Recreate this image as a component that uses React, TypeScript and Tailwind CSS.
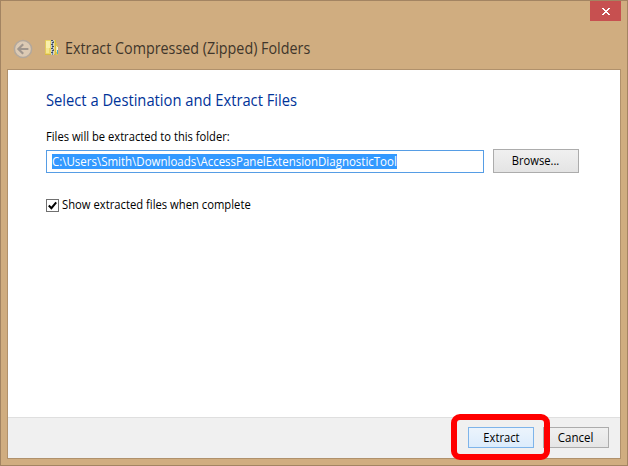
function BackButton() {
  return (
    <svg className="mt-[2px]" width="20" height="20" viewBox="0 0 20 20" fill="none">
      <circle cx="10" cy="10" r="8.6" fill="#dccab4" stroke="#b3a89c" strokeWidth="1.5" />
      <path d="M15.4 10H6M10.2 5.2L5.4 10l4.8 4.8" stroke="#a0968d" strokeWidth="2.2" />
    </svg>
  );
}

function ZipIcon() {
  return (
    <svg className="shrink-0" width="14" height="16" viewBox="0 0 14 16" shapeRendering="crispEdges">
      <path d="M10 3h2v3h1v9h-3z" fill="#dfc550" />
      <path d="M11 6h1v6h-1z" fill="#f5eaa4" />
      <path d="M12 7h1v3h-1z" fill="#f4f0dc" />
      <path d="M12 10h1v4h-1z" fill="#4faec2" />
      <path d="M0 0h11v15H0z" fill="#d8b943" />
      <path d="M0 0h10v14H0z" fill="#ecd768" />
      <path d="M0 0h1v14H0z" fill="#e2c95c" />
      <path d="M1 1h4v7H1z" fill="#f9efaa" />
      <path d="M1 8h3v5H1z" fill="#f5e68e" />
      <path d="M6 0h3v15H6z" fill="#c9cdd0" />
      <path d="M6 0h2v1H6zM7 2h2v1H7zM6 4h2v1H6zM7 6h2v1H7zM6 8h2v1H6zM7 10h2v1H7zM6 12h2v1H6z" fill="#3f4e60" />
      <path d="M8 1h1v1H8zM7 3h1v1H7zM7 5h1v1H7zM7 7h1v1H7zM8 9h1v1H8zM7 11h1v1H7zM7 13h1v2H7z" fill="#788899" />
    </svg>
  );
}

export default function App() {
  return (
    <div className="relative flex h-[466px] w-[628px] flex-col overflow-hidden border border-[#a38462] bg-[#d0ad80] px-1.5 pb-1.5 font-['Open_Sans','Noto_Sans',sans-serif] text-[12px] leading-4 text-black">
      <header className="flex h-[68px] justify-between">
        <div className="flex items-center pt-[26px] pl-[6px]">
          <BackButton />
          <span className="ml-[12px]">
            <ZipIcon />
          </span>
          <h1 className="ml-[6px] w-[250px] origin-left scale-x-[0.924] text-[15.5px] leading-5 whitespace-nowrap text-[#40362b]">Extract Compressed (Zipped) Folders</h1>
        </div>
        <button aria-label="Close" className="flex h-5 w-[31px] items-center justify-center bg-[#c75050]">
          <svg width="8" height="7" viewBox="0 0 8 7" shapeRendering="crispEdges" fill="#fff">
            <path d="M0 0h2v1H0zM6 0h2v1H6zM1 1h2v1H1zM5 1h2v1H5zM2 2h4v1H2zM3 3h2v1H3zM2 4h4v1H2zM1 5h2v1H1zM5 5h2v1H5zM0 6h2v1H0zM6 6h2v1H6z" />
          </svg>
        </button>
      </header>

      <section className="flex w-[614px] flex-1 flex-col border border-[#b0916c] bg-white">
        <main className="flex flex-1 flex-col pl-[38px]">
          <h2 className="mt-[20px] w-[300px] origin-left scale-x-[0.92] text-[16px] leading-5 whitespace-nowrap text-[#003399]">Select a Destination and Extract Files</h2>
          <label className="mt-[19px] w-[200px] origin-left scale-x-[0.932] whitespace-nowrap">Files will be extracted to this folder:</label>
          <div className="mt-1 flex items-end gap-[9px]">
            <div className="flex h-[23px] w-[438px] items-center border border-[#569de5] bg-white pl-[5px]">
              <div className="flex h-[15px] w-[345px] items-center bg-[#3399ff] text-white">
                <span className="w-[345px] origin-left scale-x-[0.957] leading-[15px] whitespace-nowrap">C:\Users\Smith\Downloads\AccessPanelExtensionDiagnosticTool</span>
              </div>
            </div>
            <button className="flex h-6 w-[86px] items-center justify-center border border-[#acacac] bg-linear-to-b from-[#f0f0f0] to-[#e4e4e4]">
              <span className="scale-x-[0.93]">Browse...</span>
            </button>
          </div>
          <div className="mt-[24px] flex items-center">
            <span className="flex size-[13px] items-center justify-center border border-[#707070] bg-white">
              <svg width="9" height="9" viewBox="0 0 9 9" fill="none">
                <path d="M.8 4.5L3.4 7.2 8.2 1.3" stroke="#000" strokeWidth="2" />
              </svg>
            </span>
            <span className="ml-[3px] origin-left scale-x-[0.937] whitespace-nowrap">Show extracted files when complete</span>
          </div>
        </main>
        <footer className="flex h-[41px] justify-end gap-[9px] border-t border-[#dfdfdf] bg-[#f0f0f0] pt-[9px] pr-[11px]">
          <button className="flex h-[21px] w-[66px] items-center justify-center border border-[#7eb4ea] bg-linear-to-b from-[#ecf4fc] to-[#dcecfc]">
            <span className="scale-x-[0.93]">Extract</span>
          </button>
          <button className="flex h-[21px] w-[66px] items-center justify-center border border-[#acacac] bg-linear-to-b from-[#f0f0f0] to-[#e5e5e5]">
            <span className="scale-x-[0.96]">Cancel</span>
          </button>
        </footer>
      </section>

      <div className="absolute top-[413px] left-[450px] h-[46px] w-[99px] rounded-[9px] border-[6px] border-[#ff0000]" />
    </div>
  );
}
